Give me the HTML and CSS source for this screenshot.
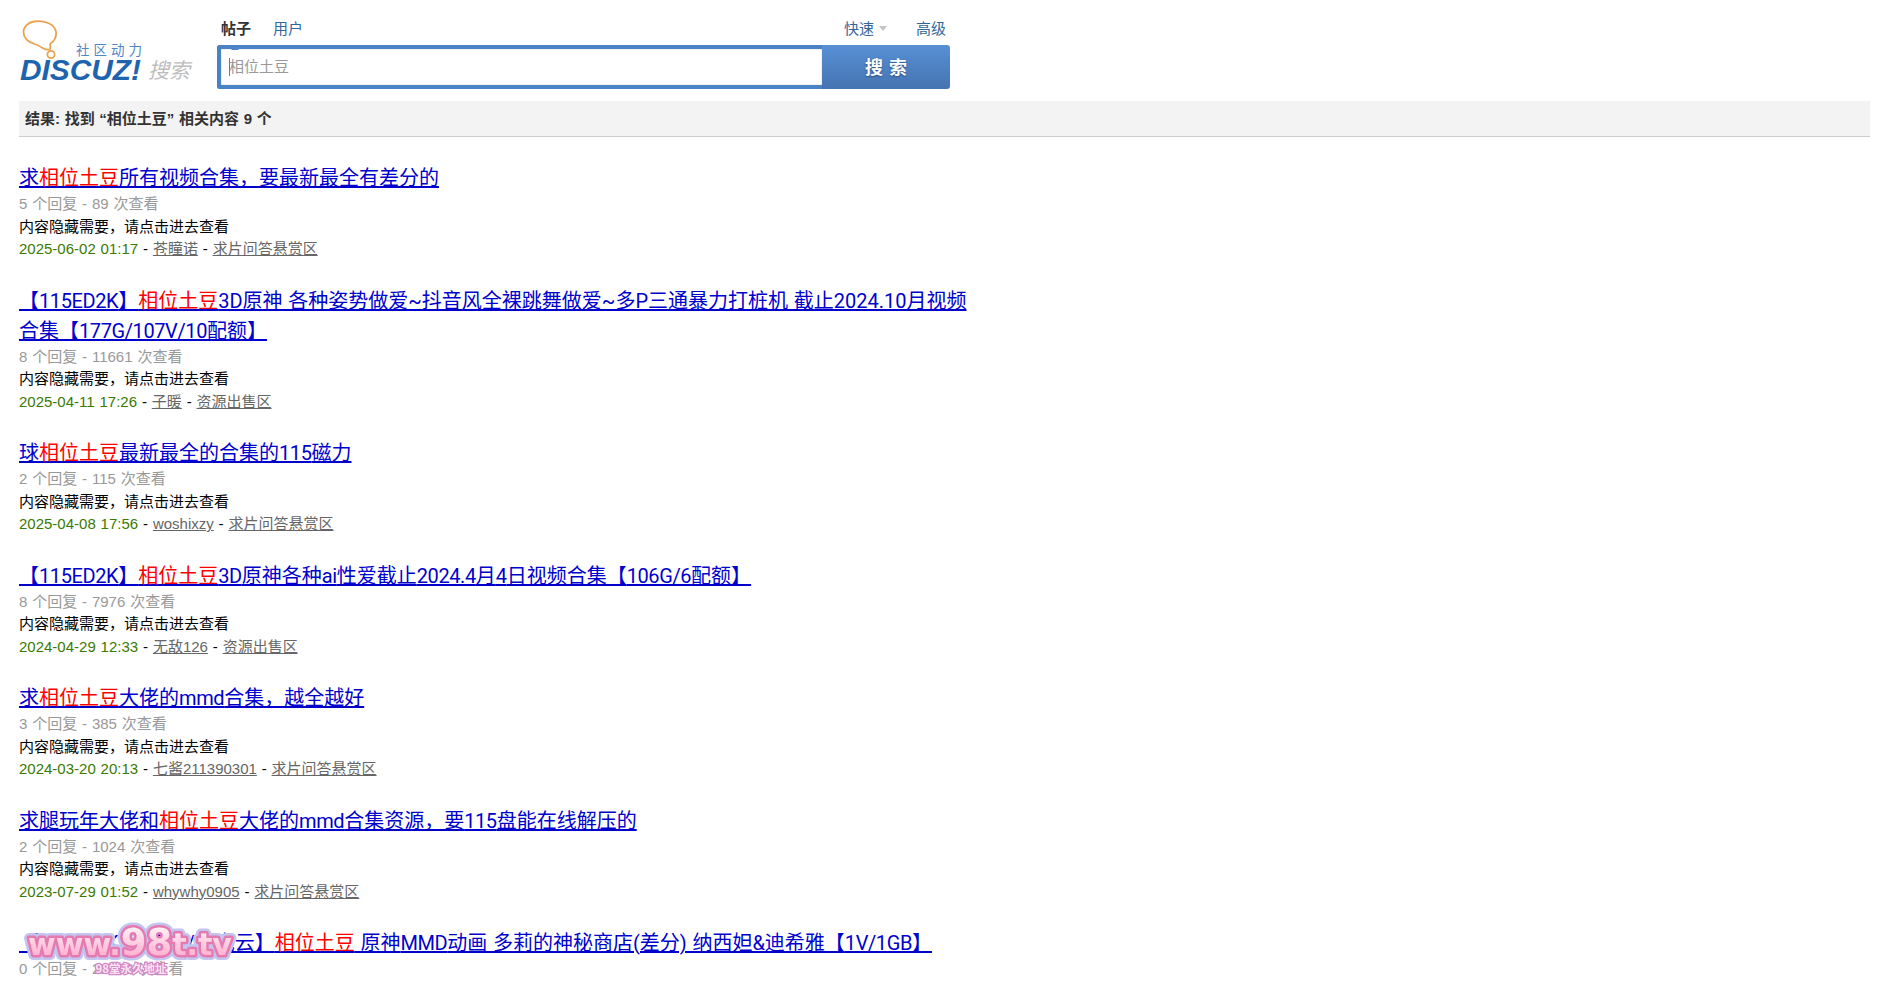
FILE: index.html
```html
<!DOCTYPE html>
<html lang="zh-CN">
  <head>
    <meta charset="UTF-8" />
    <meta name="viewport" content="width=device-width, initial-scale=1.0" />
    <title>相位土豆 - 帖子搜索</title>
    <link rel="stylesheet" href="styles.css">
  </head>
  <body>
    <div class="header">
      <a class="logo" href="#">
        <svg width="180" height="72" viewBox="0 0 180 72">
          <path class="bubble" d="M15 1.500c9-1.500 21 2 22 10.500c.6 5-1.500 8.500-5 11c-1.800 1.200-.5 3.500-.5 5c-.2 2.200-4 2.200-7 .5c-3-1.800-5.500-3.500-9-4.500c-6-2-11-6-11-12c0-5.500 4.500-9.500 10.500-10.500z" />
          <circle class="bubble" cx="32" cy="34.500" r="3.600" />
          <text class="logo-cn" x="57" y="35">社区动力</text>
          <text class="logo-en" x="1" y="60" textLength="121" lengthAdjust="spacingAndGlyphs">DISCUZ!</text>
          <text class="logo-search" x="129" y="58">搜索</text>
        </svg>
      </a>
      <div class="search">
        <div class="tabs">
          <a class="tab tab-on" href="#">帖子</a>
          <a class="tab" href="#">用户</a>
          <a class="tab tab-quick" href="#">快速<span class="caret"></span></a>
          <a class="tab" href="#">高级</a>
        </div>
        <form class="search-box">
          <div class="search-input"><span class="cursor"></span>相位土豆</div>
          <button class="search-btn" type="button">搜 索</button>
        </form>
      </div>
    </div>

    <div class="result-bar">结果: 找到 “相位土豆” 相关内容 9 个</div>

    <ul class="results">
      <li class="item">
        <h3><a href="#">求<em>相位土豆</em>所有视频合集，要最新最全有差分的</a></h3>
        <p class="stats">5 个回复 - 89 次查看</p>
        <p>内容隐藏需要，请点击进去查看</p>
        <p><span class="date">2025-06-02 01:17</span> - <a class="sub" href="#">苍瞳诺</a> - <a class="sub" href="#">求片问答悬赏区</a></p>
      </li>
      <li class="item">
        <h3><a href="#">【<span class="en">115ED2K</span>】<em>相位土豆</em>3D原神 各种姿势做爱~抖音风全裸跳舞做爱~多P三通暴力打桩机 截止2024.10月视频合集【<span class="en">177G/107V/10</span>配额】</a></h3>
        <p class="stats">8 个回复 - 11661 次查看</p>
        <p>内容隐藏需要，请点击进去查看</p>
        <p><span class="date">2025-04-11 17:26</span> - <a class="sub" href="#">子暖</a> - <a class="sub" href="#">资源出售区</a></p>
      </li>
      <li class="item">
        <h3><a href="#">球<em>相位土豆</em>最新最全的合集的<span class="en">115</span>磁力</a></h3>
        <p class="stats">2 个回复 - 115 次查看</p>
        <p>内容隐藏需要，请点击进去查看</p>
        <p><span class="date">2025-04-08 17:56</span> - <a class="sub" href="#">woshixzy</a> - <a class="sub" href="#">求片问答悬赏区</a></p>
      </li>
      <li class="item">
        <h3><a href="#">【<span class="en">115ED2K</span>】<em>相位土豆</em><span class="en">3D</span>原神各种<span class="en">ai</span>性爱截止<span class="en">2024.4</span>月<span class="en">4</span>日视频合集【<span class="en">106G/6</span>配额】</a></h3>
        <p class="stats">8 个回复 - 7976 次查看</p>
        <p>内容隐藏需要，请点击进去查看</p>
        <p><span class="date">2024-04-29 12:33</span> - <a class="sub" href="#">无敌126</a> - <a class="sub" href="#">资源出售区</a></p>
      </li>
      <li class="item">
        <h3><a href="#">求<em>相位土豆</em>大佬的<span class="en">mmd</span>合集，越全越好</a></h3>
        <p class="stats">3 个回复 - 385 次查看</p>
        <p>内容隐藏需要，请点击进去查看</p>
        <p><span class="date">2024-03-20 20:13</span> - <a class="sub" href="#">七酱211390301</a> - <a class="sub" href="#">求片问答悬赏区</a></p>
      </li>
      <li class="item">
        <h3><a href="#">求腿玩年大佬和<em>相位土豆</em>大佬的<span class="en">mmd</span>合集资源，要<span class="en">115</span>盘能在线解压的</a></h3>
        <p class="stats">2 个回复 - 1024 次查看</p>
        <p>内容隐藏需要，请点击进去查看</p>
        <p><span class="date">2023-07-29 01:52</span> - <a class="sub" href="#">whywhy0905</a> - <a class="sub" href="#">求片问答悬赏区</a></p>
      </li>
      <li class="item">
        <h3><a href="#">【<span class="en">115ED2K</span>/百度云/夸克云】<em>相位土豆</em> 原神<span class="en">MMD</span>动画 多莉的神秘商店(差分) 纳西妲&amp;迪希雅【<span class="en">1V/1GB</span>】</a></h3>
        <p class="stats">0 个回复 - 21436 次查看</p>
      </li>
    </ul>

    <div class="watermark">
      <svg width="232" height="62" viewBox="0 0 232 62">
        <defs>
          <linearGradient id="wmFill" x1="0" y1="0" x2="0" y2="1">
            <stop offset="0" stop-color="#ffffff" />
            <stop offset="1" stop-color="#ff9fc6" />
          </linearGradient>
          <text id="wmText" x="118" y="34" text-anchor="middle">www.<tspan class="wm-big">98</tspan>t.tv</text>
        </defs>
        <use class="wm-halo" href="#wmText" />
        <use class="wm-edge" href="#wmText" />
        <use class="wm-face" href="#wmText" />
        <text class="wm-sub" x="119" y="52" text-anchor="middle">98堂永久地址</text>
      </svg>
    </div>
  </body>
</html>
```

FILE: styles.css
```css
* {
  margin: 0;
  padding: 0;
  box-sizing: border-box;
}

html {
  overflow: hidden;
  height: 100%;
}

body {
  font-family: "Liberation Sans", "Noto Sans CJK SC", sans-serif;
  font-size: 15px;
  line-height: 22.5px;
  color: #000;
  background: #fff;
  height: 100%;
  overflow: hidden;
}

.header {
  display: flex;
  padding: 16px 0 0 19px;
  height: 101px;
}

.logo {
  display: block;
  width: 198px;
  padding-top: 4px;
}

.bubble {
  fill: none;
  stroke: #eba24e;
  stroke-width: 1.800;
}

.logo-cn {
  font-size: 13.500px;
  letter-spacing: 4px;
  fill: #4f86c4;
}

.logo-en {
  font-size: 29px;
  font-weight: bold;
  font-style: italic;
  fill: #1e63ae;
}

.logo-search {
  font-size: 21px;
  font-style: italic;
  fill: #bdbdbd;
}

.search {
  width: 733px;
}

/* tabs above the search box */
.tabs {
  display: flex;
  height: 29px;
  padding: 2px 4px 0 4px;
  line-height: 22px;
}

.tab {
  color: #369;
  text-decoration: none;
  margin-right: 22px;
  position: relative;
}

.tab:last-child {
  margin-right: 0;
}

.tab-on {
  font-weight: bold;
  color: #333;
}

.tab-on::after {
  content: "";
  position: absolute;
  left: 10px;
  bottom: -5px;
  border-left: 4px solid transparent;
  border-right: 4px solid transparent;
  border-bottom: 4px solid #4a86c8;
}

.tab-quick {
  margin-left: auto;
  margin-right: 29px;
}

.caret {
  display: inline-block;
  margin-left: 5px;
  vertical-align: 3px;
  border-left: 4px solid transparent;
  border-right: 4px solid transparent;
  border-top: 5px solid #c4c4c4;
}

.search-box {
  display: flex;
  height: 44px;
}

.search-input {
  flex: 1;
  display: flex;
  align-items: center;
  padding-left: 8px;
  color: #999;
  background: #fff;
  border: 4px solid #4a82c6;
  border-right: none;
  border-radius: 3px 0 0 3px;
  box-shadow: inset 0 0 2px #ccc;
}

.cursor {
  width: 1px;
  height: 18px;
  background: #777;
  margin-right: -1px;
}

.search-btn {
  width: 128px;
  padding-bottom: 2px;
  border: none;
  border-radius: 0 3px 3px 0;
  background: linear-gradient(#5691d4, #4673b1);
  color: #fff;
  font-family: inherit;
  font-size: 18px;
  font-weight: bold;
  word-spacing: 1px;
  text-shadow: 0 1px 2px #2c4f80;
}

.result-bar {
  margin: 0 22px 0 19px;
  height: 36px;
  padding-left: 6px;
  line-height: 36px;
  font-weight: bold;
  word-spacing: 0.5px;
  color: #333;
  background: #f3f3f3;
  border-bottom: 1px solid #ccc;
}

.results {
  list-style: none;
  padding: 26px 0 0 19px;
  word-spacing: 0.7px;
}

.item {
  width: 960px;
  margin-bottom: 25px;
}

.item h3 {
  font-family: Roboto, "Noto Sans CJK SC", sans-serif;
  font-size: 20px;
  line-height: 30px;
  font-weight: normal;
}

.item h3 a {
  color: #0000cc;
  text-decoration-thickness: 2px;
}

.en {
  letter-spacing: -0.4px;
}

.item em {
  font-style: normal;
  color: #f00;
}

.stats {
  color: #999;
}

.date {
  color: #3a7a00;
}

.sub {
  color: #666;
}

/* site stamp burnt into the corner */
.watermark {
  position: fixed;
  left: 12px;
  top: 921px;
  line-height: 0;
}

#wmText {
  font-family: "DejaVu Sans", sans-serif;
  font-weight: bold;
  font-size: 30px;
}

.wm-big {
  font-size: 37px;
}

.wm-halo {
  fill: none;
  stroke: #c3c4f0;
  stroke-width: 10px;
  stroke-linejoin: round;
}

.wm-edge {
  fill: none;
  stroke: #e57ab0;
  stroke-width: 5px;
  stroke-linejoin: round;
}

.wm-face {
  fill: url(#wmFill);
}

.wm-sub {
  font-family: "Noto Sans CJK SC", sans-serif;
  font-size: 11.500px;
  font-weight: bold;
  fill: #fbe3f2;
  stroke: #d48ac6;
  stroke-width: 2.500px;
  paint-order: stroke;
}
```
